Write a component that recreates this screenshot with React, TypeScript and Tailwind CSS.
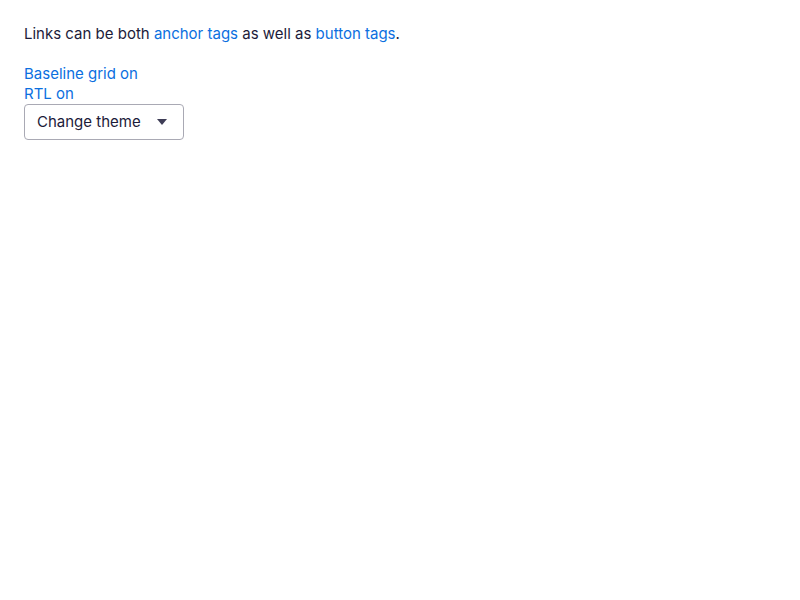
export default function App() {
  return (
    <div className="min-h-screen bg-white p-6 text-[15px] leading-5 text-[#1c1b3a]" style={{ fontFamily: "Inter, 'Noto Sans', sans-serif" }}>
      <p className="mt-0">
        Links can be both{" "}
        <a href="#" className="text-[#0b6fdf]">anchor tags</a> as well as{" "}
        <button className="text-[#0b6fdf]">button tags</button>.
      </p>
      <div className="mt-5 flex flex-col items-start">
        <button className="text-[#0b6fdf]">Baseline grid on</button>
        <button className="text-[#0b6fdf]">RTL on</button>
        <div className="mt-0 flex h-9 w-40 items-center justify-between rounded border border-[#a9a9b4] pl-3 pr-4">
          <span>Change theme</span>
          <svg width="10" height="6" viewBox="0 0 10 6">
            <path d="M0 0h10L5 6z" fill="#3e3d56" />
          </svg>
        </div>
      </div>
    </div>
  );
}
